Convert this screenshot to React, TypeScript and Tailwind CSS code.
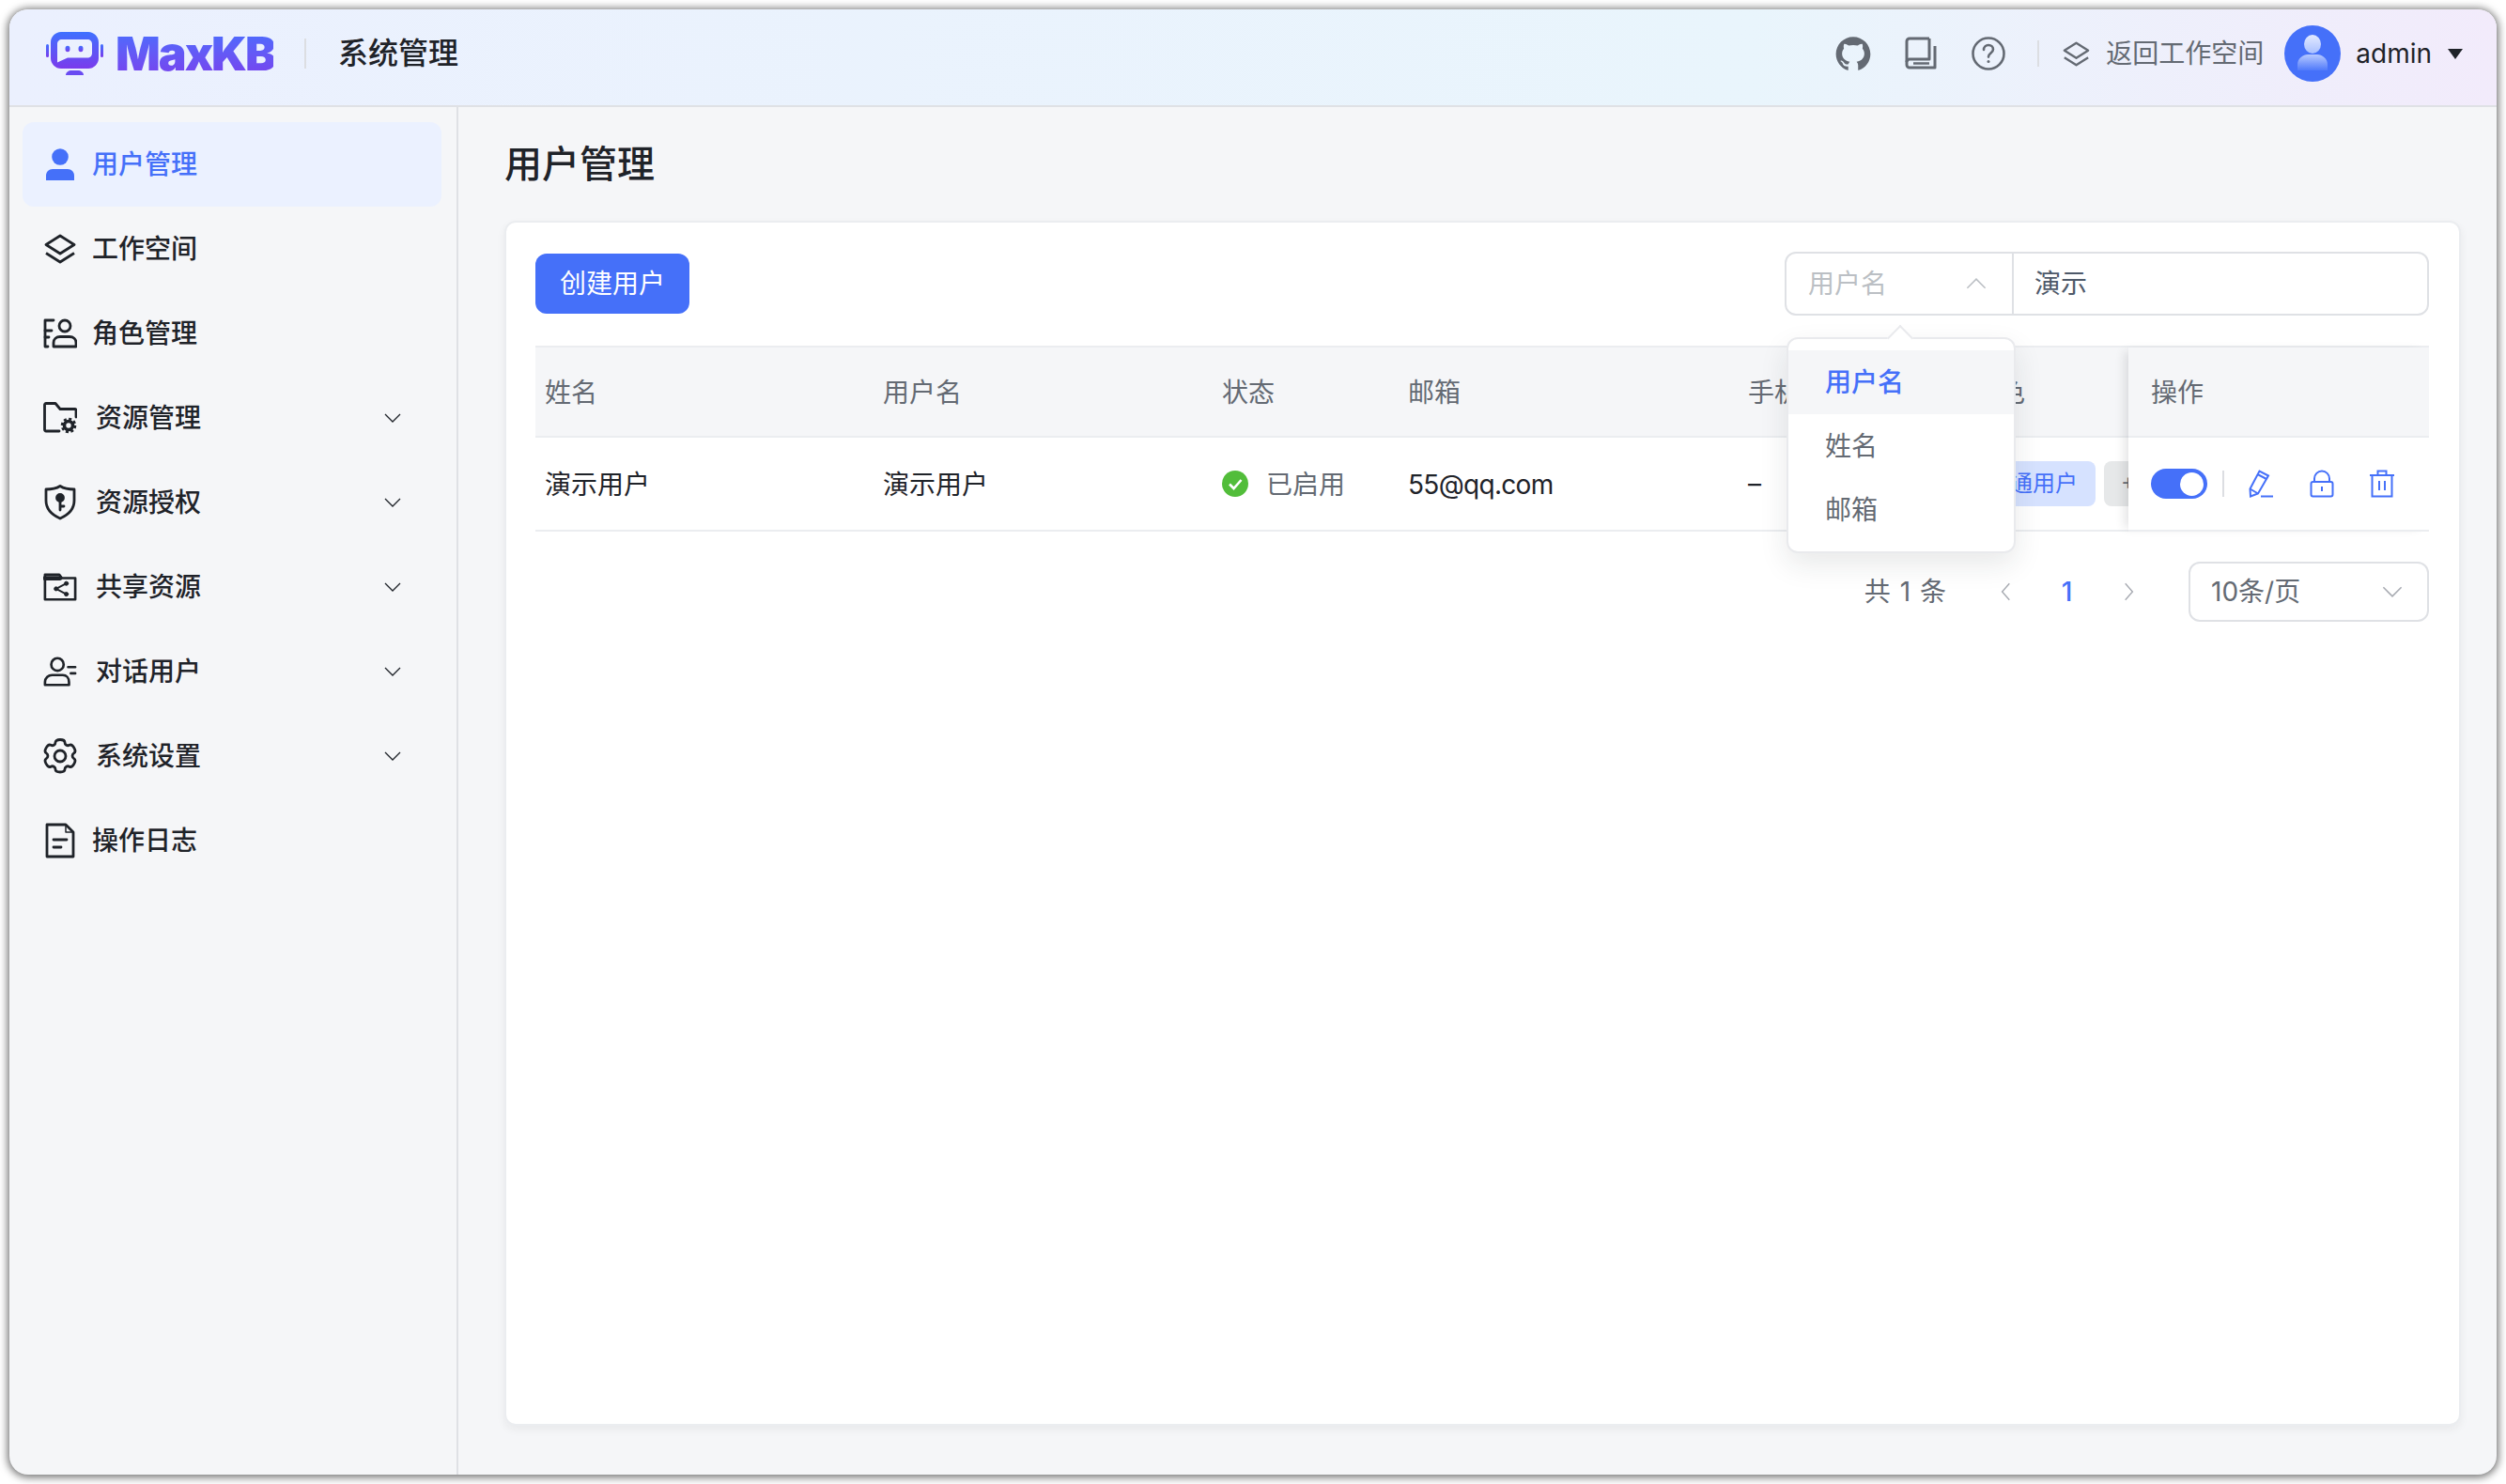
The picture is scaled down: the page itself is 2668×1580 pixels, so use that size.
import type { ReactNode } from "react";
import { AiFillGithub } from "react-icons/ai";

const font = "font-['Inter','Noto_Sans_CJK_SC',sans-serif]";

function Chevron({ dir = "down", className = "" }: { dir?: "down" | "up" | "left" | "right"; className?: string }) {
  const d = {
    down: "M2 6l8 8 8-8",
    up: "M2 14l8-8 8 8",
    left: "M13 2l-7 8 7 8",
    right: "M7 2l7 8-7 8"
  }[dir];
  return (
    <svg viewBox="0 0 20 20" className={className} fill="none" stroke="currentColor" strokeWidth="1.3">
      <path d={d} />
    </svg>
  );
}

function LayersIcon({ className = "" }: { className?: string }) {
  return (
    <svg viewBox="0 0 36 32" className={className} fill="none" stroke="currentColor" strokeWidth="2.8" strokeLinejoin="round">
      <path d="M18 2L33 11.5 18 21 3 11.5z" />
      <path d="M3 20.5L18 30 33 20.5" />
    </svg>
  );
}

function Logo() {
  return (
    <svg viewBox="0 0 61 46" className="h-[46px] w-[61px]">
      <defs>
        <linearGradient id="lg" x1="0" y1="0" x2="0" y2="1">
          <stop offset="0" stopColor="#3f71ff" />
          <stop offset="1" stopColor="#7a3bec" />
        </linearGradient>
      </defs>
      <rect x="0" y="13" width="3" height="14" rx="1.5" fill="url(#lg)" />
      <rect x="58" y="13" width="3" height="14" rx="1.5" fill="url(#lg)" />
      <path
        fillRule="evenodd"
        fill="url(#lg)"
        d="M16 0h29c6 0 11 5 11 11v17c0 6-5 11-11 11H16C10 39 5 34 5 28V11C5 5 10 0 16 0zM17 8c-3 0-5 2-5 5v19.500l11-5H44c3 0 5-2 5-5V13c0-3-2-5-5-5z"
      />
      <ellipse cx="23" cy="18" rx="2.500" ry="3.200" fill="url(#lg)" />
      <ellipse cx="37" cy="18" rx="2.500" ry="3.200" fill="url(#lg)" />
      <path d="M21 46c0-3 3-5 6-5h7c3 0 6 2 6 5z" fill="#6a4bf2" />
    </svg>
  );
}

function Avatar() {
  return (
    <svg viewBox="0 0 60 60" className="h-[60px] w-[60px]">
      <defs>
        <linearGradient id="av1" x1="0" y1="0" x2="0" y2="1">
          <stop offset="0" stopColor="#e3eaff" />
          <stop offset="1" stopColor="#a9c0ff" />
        </linearGradient>
        <linearGradient id="av2" x1="0" y1="0" x2="0" y2="1">
          <stop offset="0" stopColor="#b6c9ff" />
          <stop offset="1" stopColor="#4f79fa" />
        </linearGradient>
      </defs>
      <circle cx="30" cy="30" r="30" fill="#4570f9" />
      <ellipse cx="30" cy="20" rx="9" ry="10" fill="url(#av1)" />
      <path d="M14 48V42c0-7 6-11 11-11h10c5 0 11 4 11 11v6z" fill="url(#av2)" />
    </svg>
  );
}

function TopIconBook() {
  return (
    <svg viewBox="0 0 34 36" className="h-[36px] w-[34px]" fill="none" stroke="currentColor" strokeWidth="3" strokeLinejoin="round">
      <path d="M26 2H5a3 3 0 0 0-3 3v25a3 3 0 0 0 3 3h27V10" />
      <path d="M26 2v22H5a3 3 0 0 0-3 3" />
      <path d="M9 28.500h17" strokeWidth="2.600" />
    </svg>
  );
}

function TopIconHelp() {
  return (
    <svg viewBox="0 0 36 36" className="h-[36px] w-[36px]" fill="none" stroke="currentColor" strokeWidth="2.600" strokeLinecap="round">
      <circle cx="18" cy="18" r="16.500" />
      <path d="M13 14c0-3 2.200-5 5-5s5 2 5 4.600c0 3.900-5 4-5 8" />
      <circle cx="18" cy="26.500" r="1.500" fill="currentColor" stroke="none" />
    </svg>
  );
}

const navStroke = { fill: "none", stroke: "currentColor", strokeWidth: 2.8, strokeLinejoin: "round" as const, strokeLinecap: "round" as const };

const navIcons: Record<string, ReactNode> = {
  user: (
    <svg viewBox="0 0 36 36" className="h-[36px] w-[36px]" fill="#4570f9">
      <circle cx="18" cy="10" r="8.800" />
      <path d="M3 35v-5c0-4 3-7 7-7h16c4 0 7 3 7 7v5z" />
    </svg>
  ),
  layers: <LayersIcon className="h-[32px] w-[36px]" />,
  role: (
    <svg viewBox="0 0 36 32" className="h-[32px] w-[36px]" {...navStroke}>
      <path d="M11 2H2v28h3" />
      <path d="M2 13h7M2 20h4" />
      <circle cx="23" cy="8" r="6" />
      <path d="M11 30v-4c0-4 3-6.500 7-6.500h10c4 0 7 2.500 7 6.500v4z" />
    </svg>
  ),
  folderGear: (
    <svg viewBox="0 0 36 34" className="h-[34px] w-[36px]" {...navStroke}>
      <path d="M17 31H3a1.500 1.500 0 0 1-1.500-1.500V3A1.500 1.500 0 0 1 3 1.500h10l5 6h15.500A1.500 1.500 0 0 1 35 9v7" />
      <circle cx="27" cy="25" r="4.500" strokeWidth="3.600" strokeLinecap="butt" />
      <circle cx="27" cy="25" r="7" strokeWidth="2.600" strokeLinecap="butt" strokeDasharray="3 2.500" />
    </svg>
  ),
  shield: (
    <svg viewBox="0 0 34 38" className="h-[38px] w-[34px]" {...navStroke}>
      <path d="M2 5c5 0 11-1 15-3.500C21 4 27 5 32 5v12c0 9-6 15-15 19C8 32 2 26 2 17z" />
      <circle cx="17" cy="14" r="3.500" fill="currentColor" />
      <path d="M17 17v10M17 23h4" />
    </svg>
  ),
  folderShare: (
    <svg viewBox="0 0 38 32" className="h-[32px] w-[38px]" {...navStroke}>
      <path d="M2 30V2h16l3 4h15v24z" />
      <path d="M2 6h17" strokeWidth="5" />
      <circle cx="26" cy="12" r="2.200" fill="currentColor" strokeWidth="1" />
      <circle cx="14.500" cy="18" r="2.200" fill="currentColor" strokeWidth="1" />
      <circle cx="26" cy="24" r="2.200" fill="currentColor" strokeWidth="1" />
      <path d="M26 12l-11.500 6L26 24" strokeWidth="2" />
    </svg>
  ),
  chatUser: (
    <svg viewBox="0 0 38 34" className="h-[34px] w-[38px]" {...navStroke}>
      <circle cx="16" cy="9" r="7" />
      <path d="M2 32v-3c0-5 4-8 8-8h12c4 0 7 3 7 8v3z" />
      <path d="M28 12h8M31 19h5" />
    </svg>
  ),
  gear: (
    <svg viewBox="0 0 36 38" className="h-[38px] w-[36px]" {...navStroke}>
      <path d="M13 4.500C13 3 14.500 1.500 18 1.500s5 1.500 5 3c0 2.500 2.600 4 4.800 2.800 1.300-.7 3.300-.2 5 2.800s1.200 5-.1 5.800c-2.200 1.300-2.200 4.400 0 5.700 1.300.8 1.800 2.800.1 5.800s-3.700 3.500-5 2.800c-2.200-1.200-4.800.3-4.800 2.800 0 1.500-1.500 3-5 3s-5-1.500-5-3c0-2.500-2.600-4-4.800-2.800-1.300.7-3.300.2-5-2.800s-1.200-5 .1-5.800c2.200-1.300 2.200-4.400 0-5.700-1.300-.8-1.800-2.800-.1-5.800s3.700-3.500 5-2.800C10.400 8.500 13 7 13 4.500z" />
      <circle cx="18" cy="19" r="6" />
    </svg>
  ),
  file: (
    <svg viewBox="0 0 36 38" className="h-[38px] w-[36px]" {...navStroke}>
      <path d="M4 2h20l8 8v26H4z" />
      <path d="M24 2v8h8" strokeWidth="1.500" />
      <path d="M11 18h14M11 26h8" />
    </svg>
  )
};

type NavItem = { icon: string; label: string; children?: boolean; active?: boolean };

const navItems: NavItem[] = [
  { icon: "user", label: "用户管理", active: true },
  { icon: "layers", label: "工作空间" },
  { icon: "role", label: "角色管理" },
  { icon: "folderGear", label: "资源管理", children: true },
  { icon: "shield", label: "资源授权", children: true },
  { icon: "folderShare", label: "共享资源", children: true },
  { icon: "chatUser", label: "对话用户", children: true },
  { icon: "gear", label: "系统设置", children: true },
  { icon: "file", label: "操作日志" }
];

function Sidebar() {
  return (
    <aside className="w-[478px] shrink-0 border-r-2 border-[#dfe1e5] pl-[14px] pr-[16px] pt-[16px]">
      {navItems.map((item) => (
        <div
          key={item.label}
          className={`flex h-[90px] items-center rounded-[12px] pl-[22px] pr-[42px] text-[28px] font-medium ${
            item.active ? "bg-[#ebf1ff] text-[#4570f9]" : "text-[#1f2329]"
          }`}
        >
          <span className="flex w-[36px] items-center justify-center">{navIcons[item.icon]}</span>
          <span className={`flex-1 ${item.children ? "ml-[20px]" : "ml-[16px]"}`}>{item.label}</span>
          {item.children ? <Chevron className="h-[20px] w-[20px] text-[#1f2329]" /> : null}
        </div>
      ))}
    </aside>
  );
}

function Header() {
  return (
    <header className="flex h-[104px] shrink-0 items-center border-b-2 border-[#dfe1e5] bg-gradient-to-r from-[#ebf0fe] via-[#e9f5fc] via-70% to-[#f2ebfb] pb-[8px] pl-[39px] pr-[36px]">
      <Logo />
      <span className="ml-[13px] w-[168px] bg-gradient-to-b from-[#3f71ff] to-[#7a3bec] bg-clip-text text-[50px] font-black leading-[60px] tracking-[-2px] text-transparent">
        MaxKB
      </span>
      <span className="ml-[33px] h-[32px] w-[2px] bg-[#dcdee2]" />
      <span className="ml-[34px] text-[32px] font-medium text-[#1f2329]">系统管理</span>
      <div className="ml-auto flex items-center text-[#646a73]">
        <AiFillGithub className="h-[42px] w-[42px]" />
        <span className="ml-[34px] flex"><TopIconBook /></span>
        <span className="ml-[37px] flex"><TopIconHelp /></span>
        <span className="ml-[34px] h-[28px] w-[2px] bg-[#dcdee2]" />
        <LayersIcon className="ml-[24px] h-[27px] w-[31px]" />
        <span className="ml-[16px] text-[28px]">返回工作空间</span>
        <span className="ml-[22px] flex"><Avatar /></span>
        <span className="ml-[16px] text-[28px] text-[#1f2329]">admin</span>
        <span className="ml-[17px] h-0 w-0 border-x-[8px] border-t-[11px] border-x-transparent border-t-[#1f2329]" />
      </div>
    </header>
  );
}

function SearchBox() {
  return (
    <div className="relative flex h-[68px] w-[686px] rounded-[12px] border-2 border-[#dfe1e5] bg-white text-[28px]">
      <div className="flex w-[242px] items-center border-r-2 border-[#dfe1e5] pl-[23px] pr-[26px] text-[#bbbfc4]">
        <span className="flex-1">用户名</span>
        <Chevron dir="up" className="h-[24px] w-[24px]" />
      </div>
      <div className="flex flex-1 items-center pl-[22px] text-[#4e5969]">演示</div>
      <div className="absolute left-[0px] top-[89px] z-20 h-[230px] w-[244px] rounded-[12px] border-2 border-[#e9eaed] bg-white pt-[12px] shadow-[0_12px_30px_rgba(31,35,41,0.1)]">
        <span className="absolute -top-[11px] left-[109px] h-[20px] w-[20px] rotate-45 border-l-2 border-t-2 border-[#e9eaed] bg-white" />
        <div className="relative flex h-[68px] items-center bg-[#f5f6f8] pl-[39px] font-medium text-[#4570f9]">用户名</div>
        <div className="flex h-[68px] items-center pl-[39px] text-[#646a73]">姓名</div>
        <div className="flex h-[68px] items-center pl-[39px] text-[#646a73]">邮箱</div>
      </div>
    </div>
  );
}

const colClass = "grid grid-cols-[360px_361px_198px_362px_239px_1fr] items-center";

function UserTable() {
  return (
    <div className="mt-[32px] flex border-t-2 border-[#ebedf0] text-[28px]">
      <div className="min-w-0 flex-1 overflow-hidden">
        <div className={`${colClass} h-[96px] border-b-2 border-[#ebedf0] bg-[#f5f6f8] text-[#646a73]`}>
          {["姓名", "用户名", "状态", "邮箱", "手机号", "角色"].map((title) => (
            <div key={title} className="pl-[10px] pt-[2px]">{title}</div>
          ))}
        </div>
        <div className={`${colClass} h-[100px] border-b-2 border-[#ebedf0] text-[#1f2329]`}>
          <div className="pl-[10px] pt-[2px]">演示用户</div>
          <div className="pl-[10px] pt-[2px]">演示用户</div>
          <div className="flex items-center pl-[10px]">
            <svg viewBox="0 0 28 28" className="h-[28px] w-[28px]">
              <circle cx="14" cy="14" r="14" fill="#52bd3a" />
              <path d="M8 14.500l4.500 4.500L20.500 10" fill="none" stroke="#fff" strokeWidth="2.600" />
            </svg>
            <span className="ml-[19px] pt-[2px] text-[#646a73]">已启用</span>
          </div>
          <div className="pl-[10px] pt-[2px] tracking-[-0.7px]">55@qq.com</div>
          <div className="pl-[10px]">–</div>
          <div className="flex pl-[10px] text-[24px]">
            <span className="flex h-[48px] w-[131px] shrink-0 items-center rounded-[8px] bg-[#d6e2ff] pl-[16px] text-[#4570f9]">普通用户</span>
            <span className="ml-[9px] flex h-[48px] shrink-0 items-center rounded-[8px] bg-[#e6e8e9] pl-[18px] pr-[18px] text-[#646a73]">+1</span>
          </div>
        </div>
      </div>
      <div className="relative z-10 w-[320px] shrink-0 shadow-[-8px_0_10px_-4px_rgba(31,35,41,0.12)]">
        <div className="flex h-[96px] items-center border-b-2 border-[#ebedf0] bg-[#f5f6f8] pl-[24px] pt-[2px] text-[#646a73]">操作</div>
        <div className="flex h-[100px] items-center border-b-2 border-[#ebedf0] bg-white pl-[24px] text-[#4570f9]">
          <span className="flex h-[32px] w-[60px] items-center justify-end rounded-full bg-[#4570f9] pr-[4px]">
            <span className="h-[25px] w-[25px] rounded-full bg-white" />
          </span>
          <span className="ml-[16px] h-[28px] w-[2px] bg-[#dcdee2]" />
          <svg viewBox="0 0 28 30" className="ml-[26px] h-[30px] w-[28px]" fill="none" stroke="currentColor" strokeWidth="2">
            <path d="M1.500 20.500L11.500 1.500 21 6.500 10 25.500 2 28.500z" />
            <path d="M9.500 5l9.500 5" />
            <path d="M1.500 20.500l8.500 5" />
            <path d="M13 28.500h13" />
          </svg>
          <svg viewBox="0 0 26 30" className="ml-[37px] h-[30px] w-[26px]" fill="none" stroke="currentColor" strokeWidth="2">
            <rect x="1.500" y="13" width="23" height="15.500" rx="2" />
            <path d="M5 13V9.500a8 8 0 0 1 16 0V13" />
            <path d="M13 18v5" />
          </svg>
          <svg viewBox="0 0 28 30" className="ml-[37px] h-[30px] w-[28px]" fill="none" stroke="currentColor" strokeWidth="2">
            <path d="M1 6h26" />
            <path d="M9.500 6V1.500h9V6" />
            <path d="M3.500 6v22.500h21V6" />
            <path d="M11 12v10M17 12v10" />
          </svg>
        </div>
      </div>
    </div>
  );
}

function Pagination() {
  return (
    <div className="mt-[32px] flex h-[64px] items-center justify-end text-[28px] text-[#646a73]">
      <span className="[word-spacing:2px]">共 1 条</span>
      <span className="ml-[31px] flex w-[65px] justify-center text-[#a8abb2]"><Chevron dir="left" className="h-[22px] w-[22px]" /></span>
      <span className="flex w-[65px] justify-center font-medium text-[#4570f9]">1</span>
      <span className="flex w-[65px] justify-center text-[#a8abb2]"><Chevron dir="right" className="h-[22px] w-[22px]" /></span>
      <div className="ml-[32px] flex h-[64px] w-[256px] items-center rounded-[12px] border-2 border-[#dfe1e5] pl-[22px] pr-[25px]">
        <span className="flex-1">10条/页</span>
        <Chevron className="h-[24px] w-[24px] text-[#a8abb2]" />
      </div>
    </div>
  );
}

export default function App() {
  return (
    <div className={`${font} h-[1580px] w-[2668px] overflow-hidden bg-white p-[10px]`}>
      <div className="flex h-full flex-col overflow-hidden rounded-[20px] bg-[#f5f6f8] shadow-[0_1px_8px_2px_rgba(0,0,0,0.55)]">
        <Header />
        <div className="flex min-h-0 flex-1">
          <Sidebar />
          <main className="flex min-w-0 flex-1 flex-col pb-[52px] pl-[49px] pr-[38px] pt-[38px]">
            <h1 className="text-[40px] font-medium leading-[46px] text-[#1f2329]">用户管理</h1>
            <section className="mt-[37px] flex-1 rounded-[12px] border-2 border-[#ebedf0] bg-white pl-[31px] pr-[32px] pt-[31px] shadow-[0_4px_10px_rgba(31,35,41,0.06)]">
              <div className="flex items-center justify-between">
                <button className="flex h-[64px] w-[164px] items-center justify-center rounded-[12px] bg-[#4570f9] text-[28px] text-white">
                  创建用户
                </button>
                <SearchBox />
              </div>
              <UserTable />
              <Pagination />
            </section>
          </main>
        </div>
      </div>
    </div>
  );
}
